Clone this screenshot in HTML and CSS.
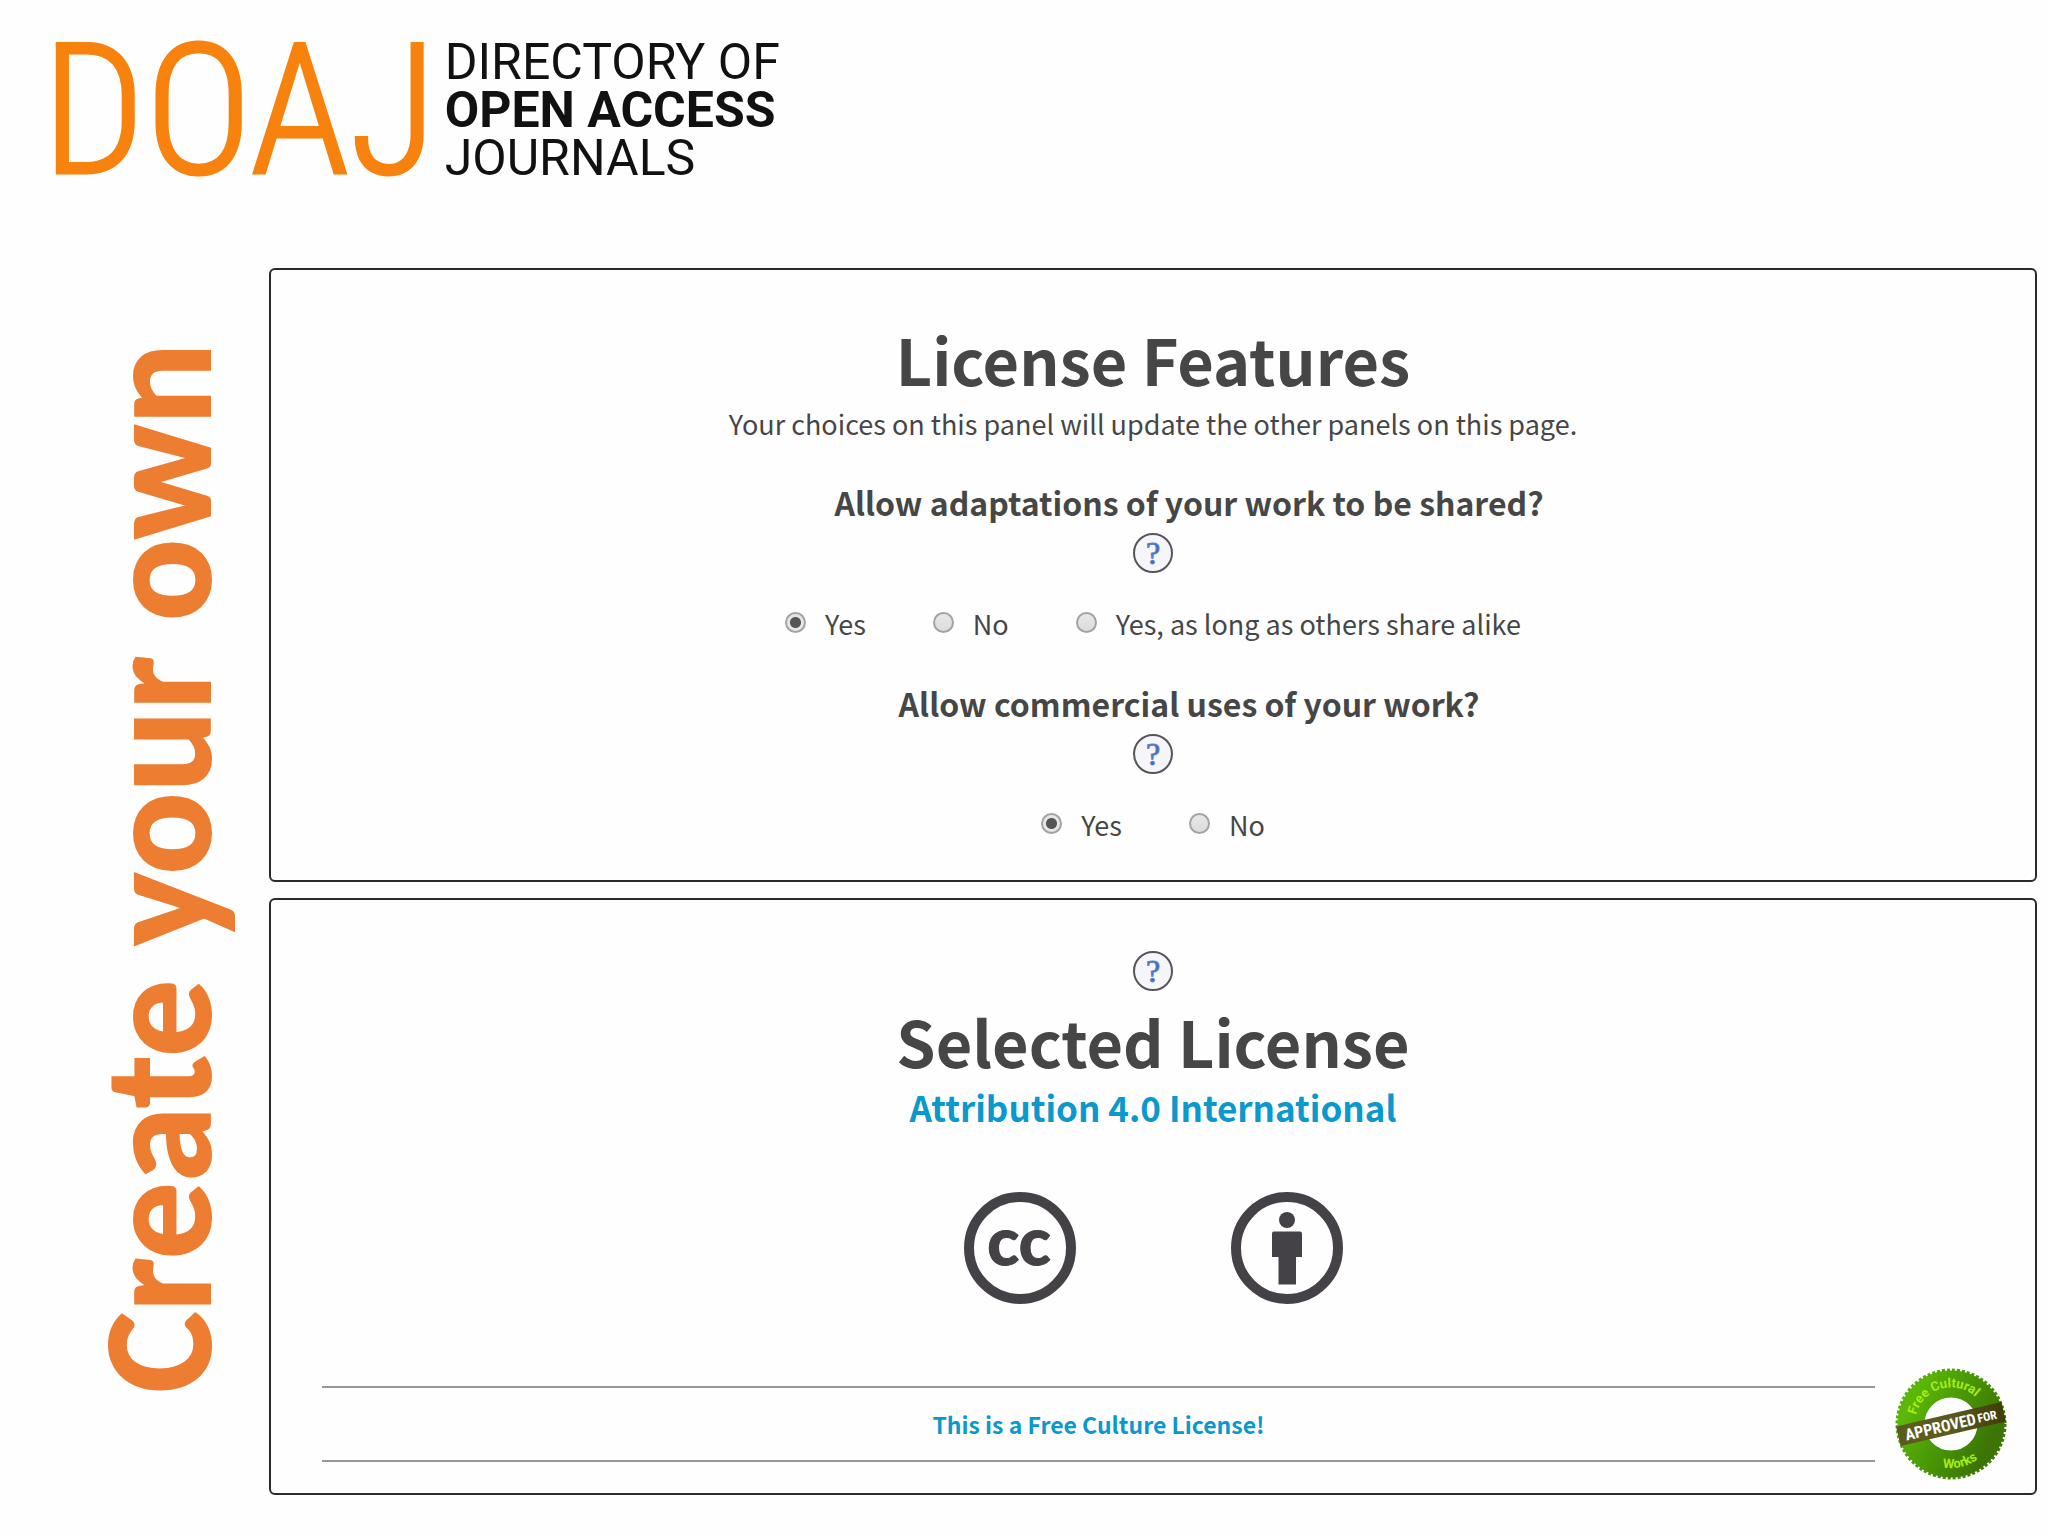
FILE: index.html
```html
<!DOCTYPE html>
<html lang="en">
<head>
<meta charset="utf-8">
<meta name="viewport" content="width=device-width, initial-scale=1">
<title>DOAJ - Create your own license</title>
<link rel="stylesheet" href="styles.css">
</head>
<body>
<header class="masthead">
  <span class="logo-mark">DOAJ</span>
  <span class="logo-name">
    <span>DIRECTORY OF</span>
    <strong>OPEN ACCESS</strong>
    <span>JOURNALS</span>
  </span>
</header>

<main class="layout">
  <h1 class="rail">Create your own</h1>

  <div class="panels">
    <section class="panel features">
      <h2 class="title">License Features</h2>
      <p class="intro">Your choices on this panel will update the other panels on this page.</p>

      <h3 class="question" id="q-adapt">Allow adaptations of your work to be shared?</h3>
      <button class="help" type="button" title="About adaptations">?</button>
      <div class="options" role="radiogroup" aria-labelledby="q-adapt">
        <label class="option"><input class="radio" type="radio" name="adapt" checked>Yes</label>
        <label class="option"><input class="radio" type="radio" name="adapt">No</label>
        <label class="option"><input class="radio" type="radio" name="adapt">Yes, as long as others share alike</label>
      </div>

      <h3 class="question" id="q-commercial">Allow commercial uses of your work?</h3>
      <button class="help" type="button" title="About commercial uses">?</button>
      <div class="options" role="radiogroup" aria-labelledby="q-commercial">
        <label class="option"><input class="radio" type="radio" name="commercial" checked>Yes</label>
        <label class="option"><input class="radio" type="radio" name="commercial">No</label>
      </div>
    </section>

    <section class="panel selected">
      <button class="help" type="button" title="About the selected license">?</button>
      <h2 class="title">Selected License</h2>
      <a class="license-link" href="#license">Attribution 4.0 International</a>

      <div class="badges">
        <svg class="badge" viewBox="0 0 112 112" role="img" aria-label="Creative Commons">
          <circle class="badge-ring" cx="56" cy="56" r="51"/>
          <text class="badge-cc" x="55" y="73" text-anchor="middle">cc</text>
        </svg>
        <svg class="badge" viewBox="0 0 112 112" role="img" aria-label="Attribution">
          <circle class="badge-ring" cx="56" cy="56" r="51"/>
          <circle class="badge-fill" cx="56" cy="28" r="8"/>
          <path class="badge-fill" d="M43 39.500h26a2 2 0 0 1 2 2V65h-6v27.500H47.500V65H41V41.500a2 2 0 0 1 2-2z"/>
        </svg>
      </div>

      <div class="culture">
        <p class="culture-note"><a class="culture-link" href="#free-culture">This is a Free Culture License!</a></p>
        <svg class="seal" viewBox="-56 -56 112 112" role="img" aria-label="Approved for Free Cultural Works">
          <defs>
            <linearGradient id="green" x1="0" y1="0.200" x2="1" y2="0.700">
              <stop offset="0" stop-color="#5cb808"/>
              <stop offset="0.450" stop-color="#4a9a06"/>
              <stop offset="1" stop-color="#3c7405"/>
            </linearGradient>
            <linearGradient id="band" x1="0" y1="0" x2="1" y2="0">
              <stop offset="0" stop-color="#5a5c1c"/>
              <stop offset="0.500" stop-color="#5c5a1e"/>
              <stop offset="1" stop-color="#3f3d08"/>
            </linearGradient>
            <path id="arc-top" d="M-35 -9A36 36 0 0 1 36 -2"/>
            <path id="arc-bottom" d="M-14 42A44 44 0 0 0 38 22"/>
          </defs>
          <circle r="40" fill="none" stroke="url(#green)" stroke-width="27"/>
          <circle r="54" fill="none" stroke="url(#green)" stroke-width="3" stroke-dasharray="3 2"/>
          <text class="seal-ring-text"><textPath href="#arc-top">Free Cultural</textPath></text>
          <text class="seal-ring-text"><textPath href="#arc-bottom" startOffset="6">Works</textPath></text>
          <g transform="rotate(-13)">
            <rect x="-54" y="-10" width="108" height="20" fill="url(#band)"/>
            <text class="seal-band-text" x="-47" y="6">APPROVED</text>
            <text class="seal-band-small" x="27" y="5">FOR</text>
          </g>
        </svg>
      </div>
    </section>
  </div>
</main>
</body>
</html>
```
FILE: styles.css
```css
* {
  box-sizing: border-box;
}

body {
  margin: 0;
  background: #fefefe;
  color: #464646;
  font-family: "Noto Sans CJK JP", "Noto Sans", sans-serif;
}

h1, h2, h3, p {
  margin: 0;
}

a {
  color: #0b98cc;
  text-decoration: none;
}

/* Masthead */
.masthead {
  display: flex;
  gap: 8px;
  padding: 38px 42px 86px;
  font-family: "Roboto", sans-serif;
}

.logo-mark {
  color: #f7820d;
  font-family: "Roboto Condensed", "Roboto", sans-serif;
  font-size: 181px;
  font-weight: 300;
  line-height: 146px;
  -webkit-text-stroke: 3px #f7820d;
}

.logo-name {
  display: flex;
  flex-direction: column;
  color: #111;
  font-size: 50px;
  line-height: 48px;
  white-space: nowrap;
}

/* Page body: turned heading beside the panels */
.layout {
  display: grid;
  grid-template-columns: auto 1fr;
  align-items: start;
  margin-top: -2px;
  padding: 0 11px 40px 78px;
}

.rail {
  margin: 75px 31px 0 0;
  color: #ed7d31;
  font-family: "Carlito", "Lato", sans-serif;
  font-size: 153px;
  font-weight: 700;
  line-height: 160px;
  white-space: nowrap;
  writing-mode: vertical-rl;
  transform: rotate(180deg);
  -webkit-text-stroke: 2px #ed7d31;
}

.panels {
  display: grid;
  gap: 16px;
}

.panel {
  display: flex;
  flex-direction: column;
  align-items: center;
  border: 2px solid #2a2a2e;
  border-radius: 6px;
  text-align: center;
}

.features {
  padding: 48px 24px 35px;
}

.selected {
  padding: 51px 0 13px;
}

.title {
  font-size: 63px;
  font-weight: 700;
  line-height: 82px;
}

.intro {
  margin-top: 4px;
  font-size: 27px;
  line-height: 40px;
}

.question {
  margin-top: 34px;
  padding-left: 72px;
  font-size: 32px;
  font-weight: 700;
  line-height: 48px;
}

.help {
  width: 40px;
  height: 40px;
  padding: 0;
  border: 2px solid #55555a;
  border-radius: 50%;
  background: #f5f5fa;
  color: #3b68bd;
  font-family: "Liberation Serif", serif;
  font-size: 32px;
  line-height: 36px;
  -webkit-text-stroke: 1px #5a82cc;
}

.question + .help {
  margin-top: 7px;
}

.options {
  display: flex;
  flex-wrap: wrap;
  justify-content: center;
  column-gap: 67px;
  margin-top: 31px;
  font-size: 27px;
  line-height: 40px;
}

.options + .question {
  margin-top: 35px;
}

.option {
  display: flex;
  align-items: center;
  gap: 19px;
}

.radio {
  appearance: none;
  width: 21px;
  height: 21px;
  margin: 0 0 3px;
  border: 2px solid #a3a3a3;
  border-radius: 50%;
  background: linear-gradient(#e8e8e8, #dcdcdc);
}

.radio:checked {
  background: radial-gradient(circle, #555 0 5px, #e6e6e6 6px);
}

/* Selected license */
.selected .title {
  margin-top: 9px;
}

.license-link {
  margin-top: 1px;
  font-size: 35px;
  font-weight: 700;
  line-height: 48px;
}

.badges {
  display: flex;
  gap: 155px;
  margin-top: 61px;
}

.badge {
  width: 112px;
  height: 112px;
}

.badge-ring {
  fill: none;
  stroke: #444247;
  stroke-width: 10px;
}

.badge-fill {
  fill: #444247;
}

.badge-cc {
  fill: #444247;
  stroke: #444247;
  stroke-width: 1px;
  font-family: "Lato", sans-serif;
  font-size: 66px;
  font-weight: 900;
}

.culture {
  display: flex;
  align-items: center;
  align-self: stretch;
  gap: 20px;
  margin-top: 64px;
  padding: 0 28px 0 51px;
}

.culture-note {
  flex: 1;
  padding: 17px 0;
  border: solid #97979a;
  border-width: 2px 0;
  font-size: 23px;
  font-weight: 700;
  line-height: 38px;
}

.seal {
  width: 112px;
  height: 112px;
}

.seal-ring-text {
  fill: #a4ec14;
  font-family: "Roboto", sans-serif;
  font-size: 13px;
  font-weight: 700;
}

.seal-band-text,
.seal-band-small {
  fill: #fff;
  font-family: "Roboto Condensed", "Roboto", sans-serif;
  font-size: 16px;
  font-weight: 700;
}

.seal-band-small {
  font-size: 12px;
}
```
